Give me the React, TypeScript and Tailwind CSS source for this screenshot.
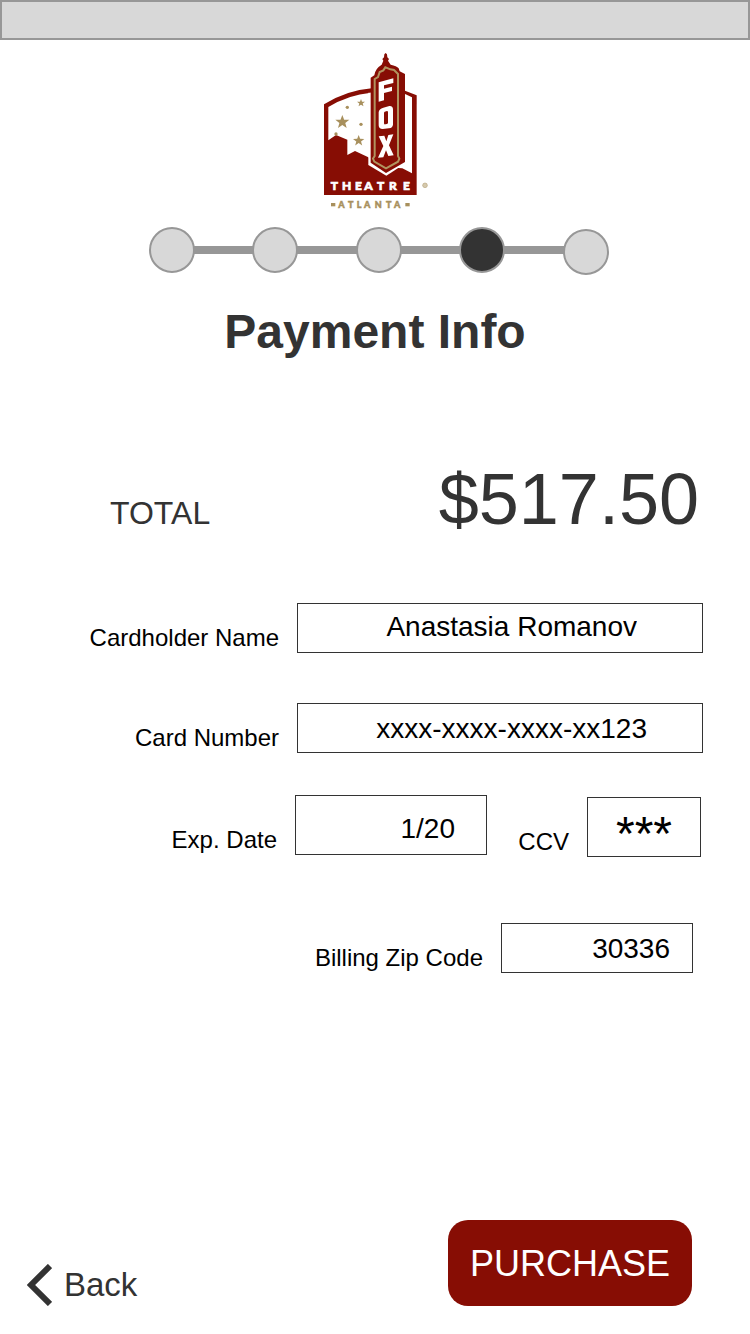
import React from "react";

const STAR = "M0,-10 L2.6,-3.2 L10,-3.1 L4.2,1.4 L6.2,8.4 L0,4.3 L-6.2,8.4 L-4.2,1.4 L-10,-3.1 L-2.6,-3.2 Z";

function Logo() {
  return (
    <svg viewBox="0 0 360 510" className="h-[170px] w-[120px]" role="img" aria-label="Fox Theatre Atlanta">
      <path d="M27 178 Q95 136 170 130 L270 137 L305 151 V450 H27 Z" fill="#870d04" />
      <path d="M40 186 Q100 149 168 143 L270 147 L291 157 V385 L262 370 L190 365 L160 337 L120 318 L97 330 V284 L63 270 L40 286 Z" fill="#fff" />
      <path d="M160 143 H268 V357 L214 392 L160 360 Z" fill="#fff" />
      <path d="M167 98 L178 91 Q180 71 200 59 L205 47 L202 42 L207 37 L208 28 L212 24 L216 28 L217 37 L222 42 L219 47 L227 59 Q245 63 251 70 L254 79 L270 87 V351 L213 384 L167 353 Z" fill="#870d04" />
      <path d="M179 333 V102 L189 96 L194 81 L205 76 L211 67 L226 73 L237 75 L249 87 V333 L253 341 L249 350 L213 370 L178 350 L174 341 Z" fill="none" stroke="#b1935f" strokeWidth="6" />
      <g fill="#fff">
        <path d="M191 112 L235 100 V114 L207 121 V131 L231 125 V138 L207 144 V166 L191 170 Z" />
        <path fillRule="evenodd" d="M205 188 L223 183 Q234 182 234 194 V239 Q233 248 222 250 L203 252 Q191 252 191 241 V202 Q192 191 205 188 Z M209 200 Q207 201 207 205 V235 Q207 239 211 238 L216 237 Q219 236 219 233 V202 Q219 198 216 198 Z" />
        <path d="M191 274 L208 272 L214 289 L220 270 L235 268 L222 301 L236 331 L220 333 L213 316 L205 337 L189 338 L205 303 Z" />
      </g>
      <g fill="#a8905d">
        <path d={STAR} transform="translate(82 231) scale(2.1)" />
        <path d={STAR} transform="translate(138 174) scale(1.2)" />
        <path d={STAR} transform="translate(131 287) scale(1.7)" />
        <circle cx="97" cy="187" r="5" />
        <circle cx="138" cy="238" r="5" />
        <circle cx="63" cy="267" r="5" />
      </g>
      <text y="434" x="47 81 120 148 186 222 264" fill="#fff" stroke="#fff" strokeWidth="2" className="font-['Lato'] text-[36px] font-black">THEATRE</text>
      <g fill="#a8905d">
        <rect x="48" y="474" width="13" height="10" />
        <rect x="271" y="474" width="13" height="10" />
        <text y="488" x="70 99 125 147 179 213 237" stroke="#a8905d" strokeWidth="1.5" className="font-['Lato'] text-[27px] font-black">ATLANTA</text>
      </g>
      <circle cx="330" cy="421" r="7" fill="#d5c9ad" stroke="#b9a67e" strokeWidth="2" />
    </svg>
  );
}

const STEPS = [1, 2, 3, 4, 5];

function Progress({ current }: { current: number }) {
  return (
    <ol aria-label="Checkout progress" className="mx-auto flex w-[460px] max-w-full items-start">
      {STEPS.map((step) => (
        <li
          key={step}
          aria-current={step === current ? "step" : undefined}
          className={step === 1 ? "flex items-start" : "flex flex-1 items-start"}
        >
          {step > 1 && <span className="-mx-px mt-[19px] h-2 flex-1 bg-[#979797]" />}
          <span
            className={
              "size-[46px] shrink-0 rounded-full border-2 border-[#979797] " +
              (step === current ? "bg-[#333333]" : "bg-[#d8d8d8]") +
              (step === 5 ? " mt-0.5" : "")
            }
          />
        </li>
      ))}
    </ol>
  );
}

const LABEL = "text-right text-2xl leading-[30px] whitespace-nowrap";
const INPUT = "min-w-0 border border-[#333333] bg-white text-black outline-none focus:border-[#870d04]";

export default function App() {
  return (
    <div className="flex min-h-screen flex-col bg-white font-['Liberation_Sans',Arial,sans-serif] text-black">
      <div className="h-10 border-2 border-[#979797] bg-[#d8d8d8]" />
      <header className="flex flex-col pt-[5px]">
        <div className="flex justify-center">
          <Logo />
        </div>
        <div className="mt-3 pl-[7px]">
          <Progress current={4} />
        </div>
        <h1 className="mt-[29px] text-center text-5xl leading-[56px] font-bold text-[#333333]">Payment Info</h1>
      </header>

      <main className="mt-[99px]">
        <div className="flex items-baseline justify-between pr-[51px] pl-[110px] text-[#333333]">
          <span className="text-[32px]">TOTAL</span>
          <span className="text-7xl leading-[80px]">$517.50</span>
        </div>

        <form id="payment" className="mt-16" onSubmit={(event) => event.preventDefault()}>
          <div className="flex items-end pr-[47px]">
            <label htmlFor="name" className={LABEL + " w-[279px]"}>Cardholder Name</label>
            <input id="name" defaultValue="Anastasia Romanov" className={INPUT + " ml-[18px] h-[50px] flex-1 pr-[65px] pb-0.5 text-right text-[28px]"} />
          </div>
          <div className="mt-[50px] flex items-end pr-[47px]">
            <label htmlFor="number" className={LABEL + " w-[279px]"}>Card Number</label>
            <input id="number" defaultValue="xxxx-xxxx-xxxx-xx123" className={INPUT + " ml-[18px] h-[50px] flex-1 pt-0.5 pr-[55px] text-right text-[28px]"} />
          </div>
          <div className="mt-[42px] flex items-end pr-[49px]">
            <label htmlFor="expiry" className={LABEL + " w-[277px] pb-0.5"}>Exp. Date</label>
            <input id="expiry" defaultValue="1/20" className={INPUT + " mb-0.5 ml-[18px] h-[60px] w-48 pt-2 pr-[31px] text-right text-[28px]"} />
            <label htmlFor="ccv" className={LABEL + " ml-auto"}>CCV</label>
            <input id="ccv" defaultValue="***" className={INPUT + " ml-[18px] h-[60px] w-[114px] pt-3 text-center text-5xl"} />
          </div>
          <div className="mt-[66px] flex items-end justify-end pr-[57px]">
            <label htmlFor="zip" className={LABEL}>Billing Zip Code</label>
            <input id="zip" defaultValue="30336" className={INPUT + " ml-[18px] h-[50px] w-48 pt-0.5 pr-[22px] text-right text-[28px]"} />
          </div>
        </form>
      </main>

      <footer className="mt-auto flex items-end justify-between pr-[58px] pb-7 pl-[27px]">
        <a href="#back" className="flex items-center gap-3 text-[#333333]">
          <svg viewBox="0 0 25 42" className="h-[42px] w-[25px]" aria-hidden="true">
            <path d="M23 2 L4 21 L23 40" fill="none" stroke="currentColor" strokeWidth="6" />
          </svg>
          <span className="text-[33px] leading-[42px]">Back</span>
        </a>
        <button type="submit" form="payment" className="h-[86px] w-[244px] rounded-[20px] bg-[#870d04] pt-0.5 text-4xl text-white">
          PURCHASE
        </button>
      </footer>
    </div>
  );
}
